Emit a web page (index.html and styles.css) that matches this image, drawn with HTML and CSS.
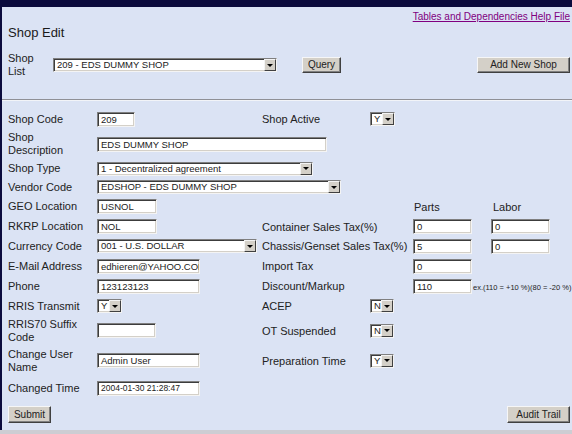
FILE: index.html
```html
<!DOCTYPE html>
<html>
<head>
<meta charset="utf-8">
<title>Shop Edit</title>
<link rel="stylesheet" href="styles.css">
</head>
<body>
<div class="page">
  <div class="topbar"></div>
  <div class="main">
    <div class="helprow"><a class="help" href="#">Tables and Dependencies Help File</a></div>
    <div class="title">Shop Edit</div>
    <div class="listrow">
      <div class="listlabel">Shop<br>List</div>
      <div class="sel w224"><span class="val">209 - EDS DUMMY SHOP</span><span class="arrow"></span></div>
      <button class="btn query">Query</button>
      <div class="spacer"></div>
      <button class="btn addnew">Add New Shop</button>
    </div>
    <div class="rule"></div>
    <div class="form">
      <!-- row 1 -->
      <div class="lbl">Shop Code</div>
      <div class="fld"><div class="inp w38">209</div></div>
      <div class="rlbl">Shop Active</div>
      <div class="fld"><div class="sel w25"><span class="val">Y</span><span class="arrow"></span></div></div>
      <div class="empty span2"></div>
      <!-- row 2 -->
      <div class="lbl">Shop<br>Description</div>
      <div class="fld span5"><div class="inp w230">EDS DUMMY SHOP</div></div>
      <!-- row 3 -->
      <div class="lbl">Shop Type</div>
      <div class="fld span5"><div class="sel w216"><span class="val">1 - Decentralized agreement</span><span class="arrow"></span></div></div>
      <!-- row 4 -->
      <div class="lbl">Vendor Code</div>
      <div class="fld span5"><div class="sel w244"><span class="val">EDSHOP - EDS DUMMY SHOP</span><span class="arrow"></span></div></div>
      <!-- row 5 -->
      <div class="lbl">GEO Location</div>
      <div class="fld"><div class="inp w60">USNOL</div></div>
      <div class="empty span2"></div>
      <div class="hdr">Parts</div>
      <div class="hdr labor">Labor</div>
      <!-- row 6 -->
      <div class="lbl">RKRP Location</div>
      <div class="fld"><div class="inp w60">NOL</div></div>
      <div class="rlbl span2n">Container Sales Tax(%)</div>
      <div class="fld"><div class="inp w59">0</div></div>
      <div class="fld"><div class="inp w59">0</div></div>
      <!-- row 7 -->
      <div class="lbl">Currency Code</div>
      <div class="fld"><div class="sel w160"><span class="val">001 - U.S. DOLLAR</span><span class="arrow"></span></div></div>
      <div class="rlbl span2n">Chassis/Genset Sales Tax(%)</div>
      <div class="fld"><div class="inp w59">5</div></div>
      <div class="fld"><div class="inp w59">0</div></div>
      <!-- row 8 -->
      <div class="lbl">E-Mail Address</div>
      <div class="fld"><div class="inp w103">edhieren@YAHOO.COM</div></div>
      <div class="rlbl span2n">Import Tax</div>
      <div class="fld"><div class="inp w59">0</div></div>
      <div class="empty"></div>
      <!-- row 9 -->
      <div class="lbl">Phone</div>
      <div class="fld"><div class="inp w103">123123123</div></div>
      <div class="rlbl span2n">Discount/Markup</div>
      <div class="fld span2 markup"><div class="inp w59">110</div><span class="note">ex.(110 = +10 %)(80 = -20 %)</span></div>
      <!-- row 10 -->
      <div class="lbl">RRIS Transmit</div>
      <div class="fld"><div class="sel w25"><span class="val">Y</span><span class="arrow"></span></div></div>
      <div class="rlbl">ACEP</div>
      <div class="fld"><div class="sel w24"><span class="val">N</span><span class="arrow"></span></div></div>
      <div class="empty span2"></div>
      <!-- row 11 -->
      <div class="lbl">RRIS70 Suffix<br>Code</div>
      <div class="fld"><div class="inp w59"></div></div>
      <div class="rlbl">OT Suspended</div>
      <div class="fld"><div class="sel w24"><span class="val">N</span><span class="arrow"></span></div></div>
      <div class="empty span2"></div>
      <!-- row 12 -->
      <div class="lbl">Change User<br>Name</div>
      <div class="fld"><div class="inp w103">Admin User</div></div>
      <div class="rlbl">Preparation Time</div>
      <div class="fld"><div class="sel w24"><span class="val">Y</span><span class="arrow"></span></div></div>
      <div class="empty span2"></div>
      <!-- row 13 -->
      <div class="lbl">Changed Time</div>
      <div class="fld"><div class="inp w103 small">2004-01-30 21:28:47</div></div>
      <div class="empty span4"></div>
    </div>
    <div class="footer">
      <button class="btn submit">Submit</button>
      <button class="btn audit">Audit Trail</button>
    </div>
  </div>
  <div class="bottomstrip"></div>
</div>
</body>
</html>
```

FILE: styles.css
```css
html, body {
  margin: 0;
  padding: 0;
}
body {
  width: 572px;
  height: 434px;
  overflow: hidden;
  background: #dbe3f4;
  font-family: "Liberation Sans", Arial, sans-serif;
  color: #222;
}
.page {
  display: flex;
  flex-direction: column;
  height: 434px;
}
.topbar {
  height: 7px;
  background: #0b0b3d;
  flex: none;
}
.main {
  flex: 1;
  border-left: 2px solid #0b0b3d;
  display: flex;
  flex-direction: column;
  min-height: 0;
}
.bottomstrip {
  height: 4px;
  flex: none;
  background: #cdcdd3;
}
.helprow {
  display: flex;
  justify-content: flex-end;
  padding: 4px 2px 0 0;
  height: 12px;
  line-height: 12px;
}
.help {
  font-size: 10px;
  color: #800080;
  text-decoration: underline;
}
.title {
  margin-top: 2px;
  padding-left: 6px;
  font-size: 13px;
  line-height: 15px;
  color: #1a1a1a;
}
.listrow {
  margin-top: 12px;
  height: 26px;
  display: flex;
  align-items: center;
  padding: 0 2px 0 6px;
}
.listlabel {
  width: 45px;
  font-size: 11px;
  line-height: 13px;
}
.spacer {
  flex: 1;
}
.rule {
  margin-top: 21px;
  height: 0;
  border-top: 1px solid #8f9096;
  border-bottom: 1px solid #f2f4f8;
}
.form {
  margin-top: 8px;
  padding-left: 6px;
  display: grid;
  grid-template-columns: 89px 165px 108px 43px 78px 1fr;
  grid-template-rows: 20px 30px 19px 18px 21px 19px 20px 20px 20px 20px 29px 31px 24px;
  font-size: 11px;
}
.lbl, .rlbl, .hdr, .fld, .empty {
  display: flex;
  align-items: center;
  min-width: 0;
}
.lbl {
  line-height: 13px;
  color: #222;
}
.rlbl {
  white-space: nowrap;
}
.hdr {
  padding-left: 1px;
}
.hdr.labor {
  padding-left: 2px;
}
.span2 { grid-column: span 2; }
.span2n { grid-column: span 2; }
.span4 { grid-column: span 4; }
.span5 { grid-column: span 5; }
.markup {
  white-space: nowrap;
  overflow: hidden;
}
.note {
  font-size: 7.5px;
  margin-left: 1px;
  margin-top: 3px;
  color: #222;
}
.inp, .sel {
  box-sizing: border-box;
  height: 15px;
  background: #fff;
  border: 1px solid;
  border-color: #7f7f7f #f4f4f4 #f4f4f4 #7f7f7f;
  box-shadow: inset 1px 1px 0 #3c3c3c, inset -1px -1px 0 #d4d0c8;
  font-size: 9.5px;
  line-height: 13px;
  color: #222;
  white-space: nowrap;
  overflow: hidden;
  flex: none;
}
.inp {
  padding-left: 3px;
}
.inp.small {
  font-size: 8.5px;
}
.sel {
  display: flex;
  align-items: stretch;
  height: 14px;
  line-height: 12px;
}
.sel .val {
  flex: 1;
  padding-left: 3px;
  overflow: hidden;
  white-space: nowrap;
}
.sel .arrow {
  width: 12px;
  flex: none;
  box-sizing: border-box;
  background: #d4d0c8;
  border: 1px solid;
  border-color: #f4f4f4 #404040 #404040 #f4f4f4;
  display: flex;
  align-items: center;
  justify-content: center;
}
.sel .arrow::after {
  content: "";
  width: 0;
  height: 0;
  border-left: 3px solid transparent;
  border-right: 3px solid transparent;
  border-top: 3px solid #000;
}
.w24 { width: 24px; }
.w25 { width: 25px; }
.w38 { width: 38px; }
.w59 { width: 59px; }
.w60 { width: 60px; }
.w103 { width: 103px; }
.w160 { width: 160px; }
.w216 { width: 216px; }
.w224 { width: 224px; }
.w230 { width: 230px; }
.w244 { width: 244px; }
.btn {
  box-sizing: border-box;
  font-family: "Liberation Sans", Arial, sans-serif;
  font-size: 10px;
  color: #222;
  background: #d4d0c8;
  border: 1px solid;
  border-color: #f6f6f6 #404040 #404040 #f6f6f6;
  box-shadow: inset -1px -1px 0 #808080;
  padding: 0;
  margin: 0;
  height: 16px;
  line-height: 14px;
  flex: none;
}
.query {
  width: 39px;
  margin-left: 25px;
}
.addnew {
  width: 93px;
}
.footer {
  margin-top: 6px;
  padding: 0 2px 0 6px;
  display: flex;
  justify-content: space-between;
}
.submit {
  width: 43px;
  height: 17px;
}
.audit {
  width: 63px;
  height: 17px;
}
```
